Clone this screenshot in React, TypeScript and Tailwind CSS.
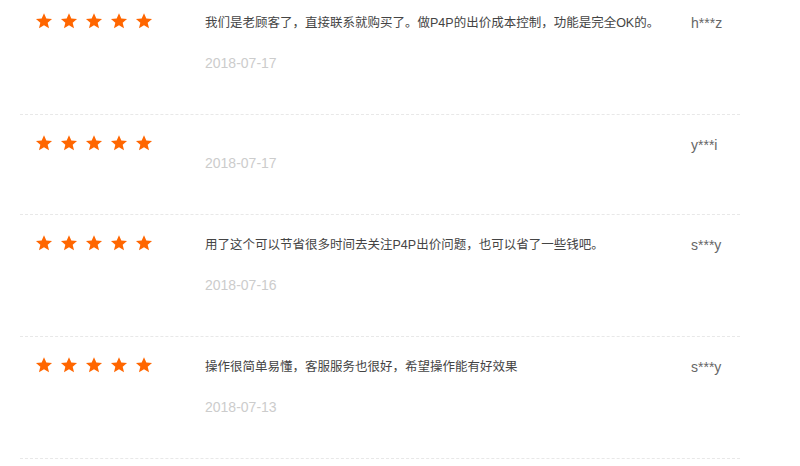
import React from 'react';

const reviews = [
  { text: '我们是老顾客了，直接联系就购买了。做P4P的出价成本控制，功能是完全OK的。', date: '2018-07-17', user: 'h***z' },
  { text: '', date: '2018-07-17', user: 'y***i' },
  { text: '用了这个可以节省很多时间去关注P4P出价问题，也可以省了一些钱吧。', date: '2018-07-16', user: 's***y' },
  { text: '操作很简单易懂，客服服务也很好，希望操作能有好效果', date: '2018-07-13', user: 's***y' },
];

function Star() {
  return (
    <svg width="18" height="18" viewBox="0 0 24 24" className="block">
      <path
        d="M12 1.5l3.1 7.1 7.6.6-5.8 5 1.8 7.5L12 17.7l-6.7 4 1.8-7.5-5.8-5 7.6-.6z"
        fill="#ff6600"
      />
    </svg>
  );
}

export default function App() {
  return (
    <div className="w-[800px] h-[466px] overflow-hidden bg-white font-['Liberation_Sans','Noto_Sans_CJK_SC',sans-serif]">
      <div className="ml-5 w-[720px] -mt-[7px]">
        {reviews.map((r, i) => (
          <div key={i} className="flex border-b border-dashed border-[#e8e8e8] pt-[19px] pb-[41px]">
            <div className="w-[185px] pl-[15px] flex gap-[7px]">
              {[0, 1, 2, 3, 4].map((s) => (
                <Star key={s} />
              ))}
            </div>
            <div className="w-[486px]">
              {r.text && <p className="text-[12.5px] leading-[22px] text-[#444]">{r.text}</p>}
              <p className="mt-[19px] text-[14px] leading-[20px] text-[#ccc]">{r.date}</p>
            </div>
            <div className="text-[14px] leading-[22px] text-[#666]">{r.user}</div>
          </div>
        ))}
      </div>
    </div>
  );
}
